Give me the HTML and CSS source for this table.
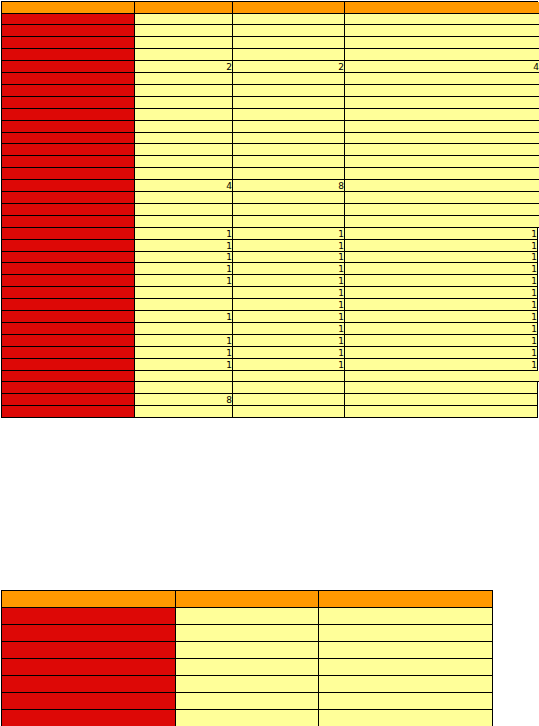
FILE: index.html
```html
<!DOCTYPE html>
<html>
<head>
<meta charset="utf-8">
<link rel="stylesheet" href="styles.css">
</head>
<body>
<div class="sheet t1">
  <div class="row h12 open"><div class="c hd"></div><div class="c hd"></div><div class="c hd"></div><div class="c hd"></div></div>
  <div class="row h11 open"><div class="c lb"></div><div class="c"></div><div class="c"></div><div class="c"></div></div>
  <div class="row open"><div class="c lb"></div><div class="c"></div><div class="c"></div><div class="c"></div></div>
  <div class="row open"><div class="c lb"></div><div class="c"></div><div class="c"></div><div class="c"></div></div>
  <div class="row open"><div class="c lb"></div><div class="c"></div><div class="c"></div><div class="c"></div></div>
  <div class="row open"><div class="c lb"></div><div class="c">2</div><div class="c">2</div><div class="c">4</div></div>
  <div class="row open"><div class="c lb"></div><div class="c"></div><div class="c"></div><div class="c"></div></div>
  <div class="row open"><div class="c lb"></div><div class="c"></div><div class="c"></div><div class="c"></div></div>
  <div class="row open"><div class="c lb"></div><div class="c"></div><div class="c"></div><div class="c"></div></div>
  <div class="row open"><div class="c lb"></div><div class="c"></div><div class="c"></div><div class="c"></div></div>
  <div class="row open"><div class="c lb"></div><div class="c"></div><div class="c"></div><div class="c"></div></div>
  <div class="row h11 open"><div class="c lb"></div><div class="c"></div><div class="c"></div><div class="c"></div></div>
  <div class="row open"><div class="c lb"></div><div class="c"></div><div class="c"></div><div class="c"></div></div>
  <div class="row open"><div class="c lb"></div><div class="c"></div><div class="c"></div><div class="c"></div></div>
  <div class="row open"><div class="c lb"></div><div class="c"></div><div class="c"></div><div class="c"></div></div>
  <div class="row open"><div class="c lb"></div><div class="c">4</div><div class="c">8</div><div class="c"></div></div>
  <div class="row open"><div class="c lb"></div><div class="c"></div><div class="c"></div><div class="c"></div></div>
  <div class="row open"><div class="c lb"></div><div class="c"></div><div class="c"></div><div class="c"></div></div>
  <div class="row open"><div class="c lb"></div><div class="c"></div><div class="c"></div><div class="c"></div></div>
  <div class="row"><div class="c lb"></div><div class="c">1</div><div class="c">1</div><div class="c">1</div></div>
  <div class="row"><div class="c lb"></div><div class="c">1</div><div class="c">1</div><div class="c">1</div></div>
  <div class="row h11"><div class="c lb"></div><div class="c">1</div><div class="c">1</div><div class="c">1</div></div>
  <div class="row"><div class="c lb"></div><div class="c">1</div><div class="c">1</div><div class="c">1</div></div>
  <div class="row"><div class="c lb"></div><div class="c">1</div><div class="c">1</div><div class="c">1</div></div>
  <div class="row"><div class="c lb"></div><div class="c"></div><div class="c">1</div><div class="c">1</div></div>
  <div class="row"><div class="c lb"></div><div class="c"></div><div class="c">1</div><div class="c">1</div></div>
  <div class="row"><div class="c lb"></div><div class="c">1</div><div class="c">1</div><div class="c">1</div></div>
  <div class="row"><div class="c lb"></div><div class="c"></div><div class="c">1</div><div class="c">1</div></div>
  <div class="row"><div class="c lb"></div><div class="c">1</div><div class="c">1</div><div class="c">1</div></div>
  <div class="row"><div class="c lb"></div><div class="c">1</div><div class="c">1</div><div class="c">1</div></div>
  <div class="row"><div class="c lb"></div><div class="c">1</div><div class="c">1</div><div class="c">1</div></div>
  <div class="row h11 open"><div class="c lb"></div><div class="c"></div><div class="c"></div><div class="c"></div></div>
  <div class="row"><div class="c lb"></div><div class="c"></div><div class="c"></div><div class="c"></div></div>
  <div class="row"><div class="c lb"></div><div class="c">8</div><div class="c"></div><div class="c"></div></div>
  <div class="row"><div class="c lb"></div><div class="c"></div><div class="c"></div><div class="c"></div></div>
</div>

<div class="sheet t2">
  <div class="row"><div class="c hd"></div><div class="c hd"></div><div class="c hd"></div></div>
  <div class="row"><div class="c lb"></div><div class="c"></div><div class="c"></div></div>
  <div class="row"><div class="c lb"></div><div class="c"></div><div class="c"></div></div>
  <div class="row"><div class="c lb"></div><div class="c"></div><div class="c"></div></div>
  <div class="row"><div class="c lb"></div><div class="c"></div><div class="c"></div></div>
  <div class="row"><div class="c lb"></div><div class="c"></div><div class="c"></div></div>
  <div class="row"><div class="c lb"></div><div class="c"></div><div class="c"></div></div>
  <div class="row"><div class="c lb"></div><div class="c"></div><div class="c"></div></div>
</div>
</body>
</html>
```

FILE: styles.css
```css
html, body {
  margin: 0;
  padding: 0;
  background: #ffffff;
}

body {
  font-family: "DejaVu Sans", Verdana, sans-serif;
  font-size: 9px;
  color: #000000;
}

.sheet {
  display: flex;
  flex-direction: column;
  border-top: 1px solid #000;
  border-left: 1px solid #000;
  margin-left: 1px;
}

.t1 {
  width: 536px;
  margin-top: 1px;
}

.t2 {
  width: 491px;
  margin-top: 172px;
}

.row {
  display: grid;
}

.t1 .row {
  grid-template-columns: 133px 98px 112px 193px;
  height: 12px;
}

.t1 .row.h11 {
  height: 11px;
}

.t2 .row {
  grid-template-columns: 174px 143px 174px;
  height: 17px;
}

.c {
  box-sizing: border-box;
  border-right: 1px solid #000;
  border-bottom: 1px solid #000;
  background: #ffff99;
  display: flex;
  justify-content: flex-end;
  align-items: center;
  line-height: 9px;
  padding-top: 1px;
  overflow: hidden;
}

.c.hd {
  background: #ff9900;
}

.c.lb {
  background: #dd0806;
}

.open > .c:last-child {
  border-right: 0;
  margin-right: -1px;
}
```
